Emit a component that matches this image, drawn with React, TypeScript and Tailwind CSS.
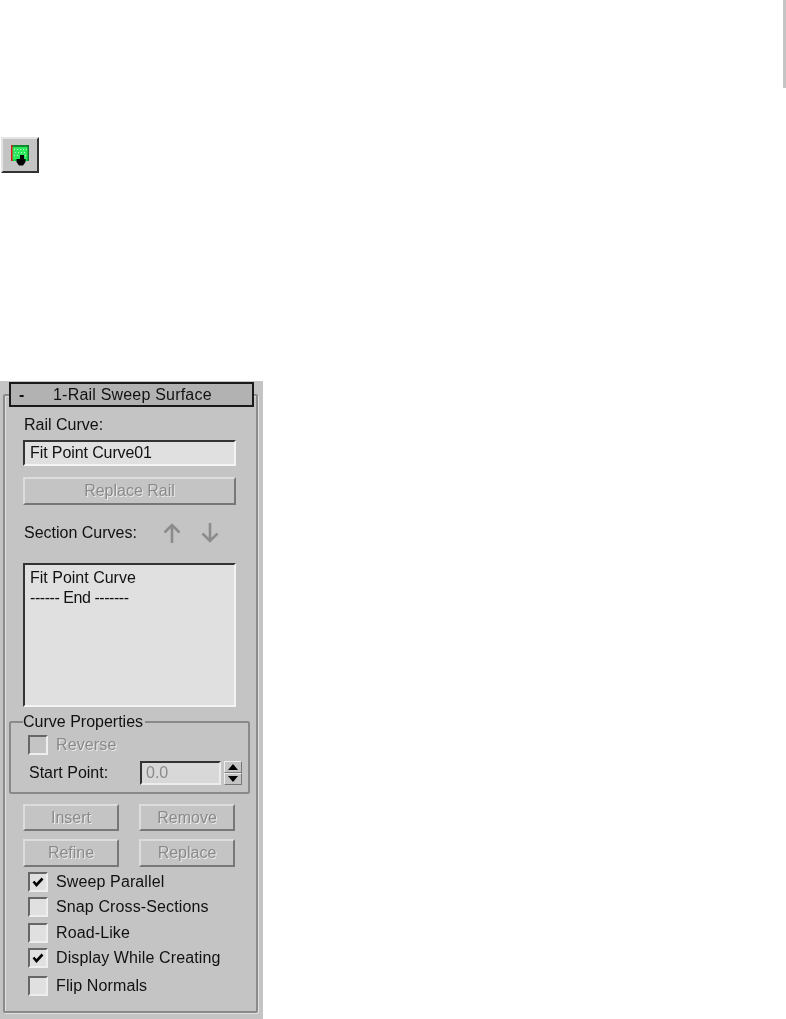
import React from 'react';

const FONT = "font-['Liberation_Sans',Arial,sans-serif]";

const Btn: React.FC<{ label: string; className: string }> = ({ label, className }) => (
  <div
    className={`flex items-center justify-center border-2 border-t-[#dcdcdc] border-l-[#dcdcdc] border-r-[#777777] border-b-[#777777] text-[#8a8a8a] [text-shadow:1px_1px_0_#ececec] ${className}`}
  >
    {label}
  </div>
);

const Check: React.FC<{ label: string; checked?: boolean; disabled?: boolean; className?: string }> = ({
  label,
  checked,
  disabled,
  className = '',
}) => (
  <div className={`flex items-center h-[20px] ml-[23px] ${className}`}>
    <div
      className={`w-[20px] h-[20px] shrink-0 flex items-center justify-center border-2 border-t-[#666666] border-l-[#666666] border-r-[#eeeeee] border-b-[#eeeeee] ${
        disabled ? 'bg-[#c4c4c4]' : 'bg-[#e0e0e0]'
      }`}
    >
      {checked && (
        <svg width="12" height="12" viewBox="0 0 12 12">
          <path d="M1.5 5.5 L4.5 9 L10.5 2.5" fill="none" stroke="#000" strokeWidth="2.6" />
        </svg>
      )}
    </div>
    <span
      className={`ml-[8px] tracking-[0.12px] ${
        disabled ? 'text-[#8a8a8a] [text-shadow:1px_1px_0_#ececec]' : 'text-[#111111]'
      }`}
    >
      {label}
    </span>
  </div>
);

const Arrow: React.FC<{ down?: boolean }> = ({ down }) => (
  <svg width="18" height="20" viewBox="0 0 18 20" className={down ? 'rotate-180' : ''}>
    <path d="M9 20 V2 M1.5 9.5 L9 2 L16.5 9.5" fill="none" stroke="#8c8c8c" strokeWidth="2.6" />
  </svg>
);

export default function App() {
  return (
    <div className={`w-[786px] h-[1019px] bg-white overflow-hidden text-[16px] leading-[18px] ${FONT} blur-[0.4px]`}>
      {/* sliver of the page edge */}
      <div className="flex justify-end">
        <div className="w-[3px] h-[88px] bg-[#c4c4c4]" />
      </div>

      {/* toolbar icon */}
      <div className="mt-[49px] ml-[1px] w-[38px] h-[36px] flex items-center justify-center bg-[#c4c4c4] border-2 border-t-[#e4e4e4] border-l-[#e4e4e4] border-r-[#333333] border-b-[#333333]">
        <svg width="20" height="22" viewBox="0 0 20 22">
          <rect x="1" y="1" width="18" height="16" fill="#2ee85c" />
          <path
            d="M4 5h1v1H4zM7 5h1v1H7zM10 5h1v1h-1zM13 5h1v1h-1zM16 5h1v1h-1zM5 8h1v1H5zM8 8h1v1H8zM11 8h1v1h-1zM14 8h1v1h-1zM4 11h1v1H4zM7 11h1v1H7zM15 11h1v1h-1z"
            fill="#b8f8c8"
          />
          <rect x="1" y="1" width="18" height="2" fill="#0e8a30" />
          <rect x="1" y="15.5" width="18" height="1.5" fill="#00d040" />
          <rect x="1" y="1" width="1.5" height="16" fill="#e01818" />
          <rect x="17.5" y="1" width="1.5" height="16" fill="#0c7a28" />
          <path d="M10 11 H14 V15 H15.5 V18 L13 21.5 H9 L6.5 18 V15 H10 Z" fill="#000" />
        </svg>
      </div>

      {/* rollout */}
      <div className="mt-[208px] w-[263px] h-[638px] bg-[#c4c4c4] pt-[13px] pl-[3px]">
        <div className="w-[255px] h-[619px] border-2 border-[#8a8a8a] rounded-[2px] shadow-[1px_1px_0_#e2e2e2,inset_1px_1px_0_#e2e2e2]">
          <div className="-mt-[14px] ml-[4px] w-[245px] h-[25px] flex items-center bg-[#b2b2b2] border-2 border-[#1a1a1a] text-[#111111]">
            <span className="ml-[8px] w-[34px] font-bold">-</span>
            <span className="tracking-[0.2px]">1-Rail Sweep Surface</span>
          </div>

          <div className="mt-[9px] ml-[19px] text-[#111111]">Rail Curve:</div>
          <div className="mt-[6px] ml-[18px] w-[213px] h-[26px] flex items-center pl-[5px] bg-[#e0e0e0] border-2 border-t-[#333333] border-l-[#333333] border-r-[#f4f4f4] border-b-[#f4f4f4] text-[#111111] tracking-[-0.1px]">
            Fit Point Curve01
          </div>
          <Btn label="Replace Rail" className="mt-[11px] ml-[18px] w-[213px] h-[28px]" />

          <div className="mt-[18px] ml-[19px] h-[20px] flex items-center text-[#111111]">
            <span>Section Curves:</span>
            <div className="ml-[26px] flex gap-[20px]">
              <Arrow />
              <Arrow down />
            </div>
          </div>

          <div className="mt-[20px] ml-[18px] w-[213px] h-[144px] pl-[5px] pt-[3px] bg-[#e0e0e0] border-2 border-t-[#333333] border-l-[#333333] border-r-[#f4f4f4] border-b-[#f4f4f4] text-[#111111] leading-[20px]">
            <div>Fit Point Curve</div>
            <div className="tracking-[-0.45px]">------ End -------</div>
          </div>

          <fieldset className="mt-[6px] ml-[4px] w-[241px] h-[81px] border-2 border-[#8a8a8a] rounded-[2px]">
            <legend className="ml-[12px] pr-[2px] text-[#111111]">Curve Properties</legend>
            <Check label="Reverse" disabled className="mt-[4px] !ml-[17px]" />
            <div className="mt-[6px] ml-[18px] h-[24px] flex items-center text-[#111111]">
              <span className="w-[111px]">Start Point:</span>
              <div className="w-[81px] h-[24px] flex items-center pl-[4px] bg-[#d8d8d8] border-2 border-t-[#333333] border-l-[#333333] border-r-[#ececec] border-b-[#ececec] text-[#8a8a8a]">
                0.0
              </div>
              <div className="ml-[3px] w-[18px] h-[24px] flex flex-col">
                <div className="h-[12px] flex items-center justify-center border border-t-[#eeeeee] border-l-[#eeeeee] border-r-[#777777] border-b-[#777777]">
                  <svg width="10" height="6" viewBox="0 0 10 6">
                    <path d="M5 0 L10 6 H0 Z" fill="#000" />
                  </svg>
                </div>
                <div className="h-[12px] flex items-center justify-center border border-t-[#eeeeee] border-l-[#eeeeee] border-r-[#777777] border-b-[#777777]">
                  <svg width="10" height="6" viewBox="0 0 10 6">
                    <path d="M0 0 H10 L5 6 Z" fill="#000" />
                  </svg>
                </div>
              </div>
            </div>
          </fieldset>

          <div className="mt-[10px] ml-[18px] flex gap-[20px]">
            <Btn label="Insert" className="w-[96px] h-[27px]" />
            <Btn label="Remove" className="w-[96px] h-[27px]" />
          </div>
          <div className="mt-[8px] ml-[18px] flex gap-[20px]">
            <Btn label="Refine" className="w-[96px] h-[28px]" />
            <Btn label="Replace" className="w-[96px] h-[28px]" />
          </div>

          <Check label="Sweep Parallel" checked className="mt-[5px]" />
          <Check label="Snap Cross-Sections" className="mt-[5px]" />
          <Check label="Road-Like" className="mt-[6px]" />
          <Check label="Display While Creating" checked className="mt-[5px]" />
          <Check label="Flip Normals" className="mt-[8px]" />
        </div>
      </div>
    </div>
  );
}
